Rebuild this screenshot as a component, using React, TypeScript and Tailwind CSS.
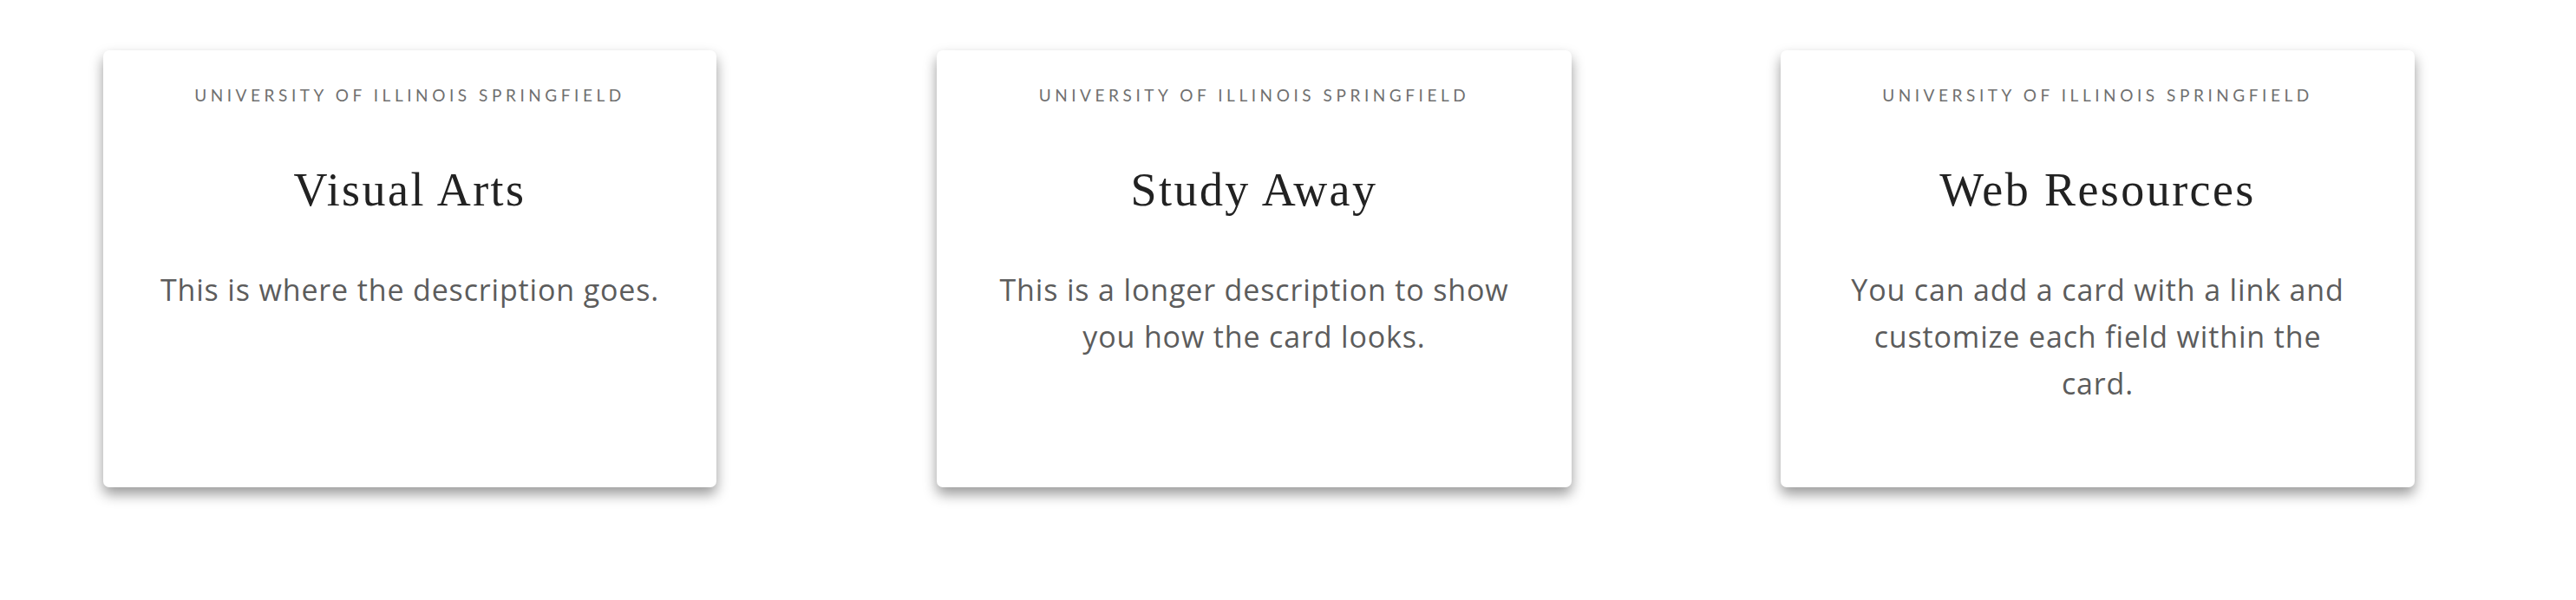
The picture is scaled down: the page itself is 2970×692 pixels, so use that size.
import React from "react";

type CardData = {
  title: string;
  body: string;
  width: string;
};

const cards: CardData[] = [
  { title: "Visual Arts", body: "This is where the description goes.", width: "w-[707px]" },
  { title: "Study Away", body: "This is a longer description to show you how the card looks.", width: "w-[732px]" },
  { title: "Web Resources", body: "You can add a card with a link and customize each field within the card.", width: "w-[731px]" },
];

function Card({ title, body, width }: CardData) {
  return (
    <a
      href="#"
      className={`${width} h-[504px] shrink-0 flex flex-col items-center bg-white rounded-[7px] shadow-[0_8px_15px_rgba(0,0,0,0.4)] pt-[40px] px-[65px] text-center no-underline`}
    >
      <div className="font-['Lato',sans-serif] text-[19px] leading-[24px] tracking-[0.24em] text-[#707070] uppercase whitespace-nowrap">
        University of Illinois Springfield
      </div>
      <h2 className="mt-[65px] font-['Liberation_Serif',serif] text-[54px] leading-[64px] tracking-[0.045em] text-[#222222] font-normal">
        {title}
      </h2>
      <p className="mt-[56px] font-['Open_Sans',sans-serif] text-[34px] leading-[54px] tracking-[0.025em] text-[#5c5c5c]">
        {body}
      </p>
    </a>
  );
}

export default function App() {
  return (
    <div className="w-[2970px] h-[692px] bg-white">
      <div className="flex items-start pt-[58px] pl-[119px] gap-x-[254px]">
        <Card {...cards[0]} />
        <div className="flex items-start gap-x-[241px]">
          <Card {...cards[1]} />
          <Card {...cards[2]} />
        </div>
      </div>
    </div>
  );
}
